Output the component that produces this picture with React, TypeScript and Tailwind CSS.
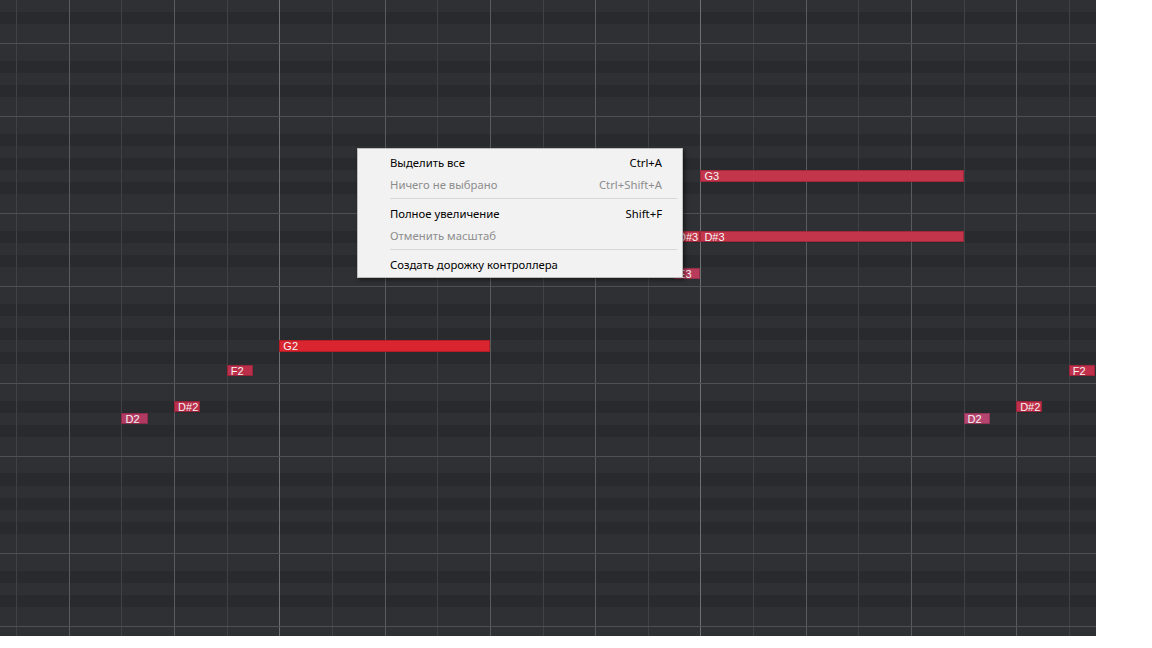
import React from "react";

const ROW = 12.143;
const COL = 52.63;
const X0 = 16.2;

const DARK = new Set([1, 5, 7, 11, 13]);

type Note = { c: number; r: number; w: number; label: string; color: string };

const notes: Note[] = [
  { c: 2, r: 34, w: 0.5, label: "D2", color: "bg-[#b13a62] border-[#8e2c4c]" },
  { c: 3, r: 33, w: 0.5, label: "D#2", color: "bg-[#bb2f4b] border-[#96243b]" },
  { c: 4, r: 30, w: 0.5, label: "F2", color: "bg-[#bb2f4b] border-[#96243b]" },
  { c: 5, r: 28, w: 4, label: "G2", color: "bg-[#d9252f] border-[#b51c25]" },
  { c: 12.5, r: 19, w: 0.5, label: "D#3", color: "bg-[#c3354a] border-[#a02a3c]" },
  { c: 12.5, r: 22, w: 0.5, label: "E3", color: "bg-[#b83b5c] border-[#952e49]" },
  { c: 13, r: 14, w: 5, label: "G3", color: "bg-[#c3354a] border-[#a02a3c]" },
  { c: 13, r: 19, w: 5, label: "D#3", color: "bg-[#c3354a] border-[#a02a3c]" },
  { c: 18, r: 34, w: 0.5, label: "D2", color: "bg-[#b5446f] border-[#923658]" },
  { c: 19, r: 33, w: 0.5, label: "D#2", color: "bg-[#c0304a] border-[#9c253b]" },
  { c: 20, r: 30, w: 0.5, label: "F2", color: "bg-[#c0304a] border-[#9c253b]" },
];

const hLines = [43, 116, 213, 286, 383, 456, 553, 626];

function MenuItem({ label, shortcut, disabled }: { label: string; shortcut?: string; disabled?: boolean }) {
  return (
    <div
      className={
        "flex h-[22px] items-center justify-between pl-[32px] pr-[20px] " +
        (disabled ? "text-[#8d8d8d]" : "text-[#000000]")
      }
    >
      <span>{label}</span>
      {shortcut ? <span>{shortcut}</span> : null}
    </div>
  );
}

function Sep() {
  return (
    <div className="flex h-[7px] flex-col pl-[32px] pr-[5px]">
      <div className="mt-[2px] h-px bg-[#d7d7d7]" />
    </div>
  );
}

export default function App() {
  const rows = Array.from({ length: 53 }, (_, i) => i);
  const vlines = Array.from({ length: 21 }, (_, k) => k);
  return (
    <div className="h-[648px] w-[1152px] overflow-hidden bg-white">
      <div className="relative h-[636px] w-[1096px] overflow-hidden bg-[#2e2f32]">
        <div className="flex flex-col">
          {rows.map((r) => (
            <div
              key={r}
              className={"h-[12.143px] shrink-0 " + (DARK.has(r % 14) ? "bg-[#292a2d]" : "bg-[#2f3033]")}
            />
          ))}
        </div>
        {vlines.map((k) => (
          <div
            key={"v" + k}
            className={
              "absolute top-0 h-full w-px " +
              (k % 8 === 5 ? "bg-[#6e6f72]" : k % 2 === 1 ? "bg-[#5a5b5e]" : "bg-[#404144]")
            }
            style={{ left: Math.round(X0 + COL * k) }}
          />
        ))}
        {hLines.map((y) => (
          <div key={"h" + y} className="absolute left-0 h-px w-full bg-[#4f5053]" style={{ top: y }} />
        ))}
        {notes.map((n, i) => (
          <div
            key={i}
            className={
              "absolute flex items-center border pl-[3px] text-[11px] leading-[10px] text-[#f5f5f5] " +
              n.color
            }
            style={{
              left: X0 + COL * n.c,
              top: ROW * n.r + 0.4,
              width: COL * n.w,
              height: 11.2,
              fontFamily: '"Liberation Sans", Arial, sans-serif',
            }}
          >
            <span className="whitespace-nowrap pt-px">{n.label}</span>
          </div>
        ))}
        <div
          className="absolute left-[357px] top-[148px] w-[326px] border border-[#bdbdbd] bg-[#f2f2f2] pb-px pt-[3px] text-[11.3px] shadow-[2px_2px_4px_rgba(0,0,0,0.45)]"
          style={{ fontFamily: '"Noto Sans", "Open Sans", sans-serif' }}
        >
          <MenuItem label="Выделить все" shortcut="Ctrl+A" />
          <MenuItem label="Ничего не выбрано" shortcut="Ctrl+Shift+A" disabled />
          <Sep />
          <MenuItem label="Полное увеличение" shortcut="Shift+F" />
          <MenuItem label="Отменить масштаб" disabled />
          <Sep />
          <MenuItem label="Создать дорожку контроллера" />
        </div>
      </div>
    </div>
  );
}
